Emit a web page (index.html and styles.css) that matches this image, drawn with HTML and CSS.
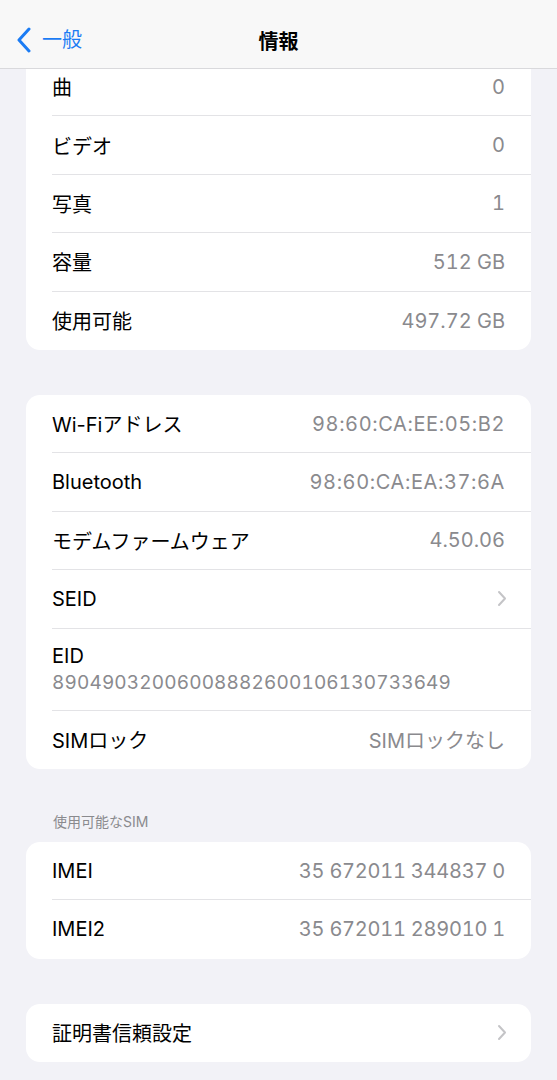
FILE: index.html
```html
<!DOCTYPE html>
<html lang="ja">
<head>
<meta charset="utf-8">
<title>情報</title>
<link rel="stylesheet" href="styles.css">
</head>
<body>
<header class="nav">
  <a class="back">
    <svg class="back-icon" width="16" height="26" viewBox="0 0 16 26"><path d="M13 2 L3 13 L13 24" fill="none" stroke="currentColor" stroke-width="3" stroke-linecap="round" stroke-linejoin="round"/></svg>
    <span>一般</span>
  </a>
  <div class="title">情報</div>
</header>
<main class="content">
  <section class="card first">
    <div class="row"><span class="label">曲</span><span class="value">0</span></div>
    <div class="row"><span class="label">ビデオ</span><span class="value">0</span></div>
    <div class="row"><span class="label">写真</span><span class="value">1</span></div>
    <div class="row"><span class="label">容量</span><span class="value">512 GB</span></div>
    <div class="row"><span class="label">使用可能</span><span class="value">497.72 GB</span></div>
  </section>

  <section class="card before-title">
    <div class="row"><span class="label">Wi-Fiアドレス</span><span class="value mac">98:60:CA:EE:05:B2</span></div>
    <div class="row"><span class="label">Bluetooth</span><span class="value mac">98:60:CA:EA:37:6A</span></div>
    <div class="row"><span class="label">モデムファームウェア</span><span class="value">4.50.06</span></div>
    <div class="row"><span class="label">SEID</span><svg class="chev" width="10" height="17" viewBox="0 0 10 17"><path d="M2 2 L8 8.5 L2 15" fill="none" stroke="currentColor" stroke-width="2" stroke-linecap="round" stroke-linejoin="round"/></svg></div>
    <div class="row tall"><span class="label">EID</span><span class="sub">89049032006008882600106130733649</span></div>
    <div class="row"><span class="label">SIMロック</span><span class="value">SIMロックなし</span></div>
  </section>

  <h2 class="section-title">使用可能なSIM</h2>
  <section class="card tight">
    <div class="row"><span class="label">IMEI</span><span class="value imei">35 672011 344837 0</span></div>
    <div class="row"><span class="label">IMEI2</span><span class="value imei">35 672011 289010 1</span></div>
  </section>

  <section class="card">
    <div class="row"><span class="label">証明書信頼設定</span><svg class="chev" width="10" height="17" viewBox="0 0 10 17"><path d="M2 2 L8 8.5 L2 15" fill="none" stroke="currentColor" stroke-width="2" stroke-linecap="round" stroke-linejoin="round"/></svg></div>
  </section>
</main>
</body>
</html>
```
FILE: styles.css
```css
* { box-sizing: border-box; }
html, body { margin: 0; padding: 0; }
body {
  background: #f2f2f7;
  font-family: Inter, "Noto Sans CJK JP", sans-serif;
  color: #000;
  width: 557px;
  height: 1080px;
  overflow: hidden;
}
.nav {
  position: fixed;
  top: 0; left: 0; right: 0;
  height: 69px;
  background: #f8f8f8;
  border-bottom: 1px solid #d9d9dc;
  display: flex;
  align-items: center;
  justify-content: center;
  z-index: 2;
}
.back {
  position: absolute;
  left: 16px;
  top: 27px;
  display: flex;
  align-items: center;
  gap: 10px;
  color: #1b7cf4;
  font-size: 20px;
  line-height: 26px;
}
.back-icon { display: block; }
.title {
  font-size: 20px;
  font-weight: 700;
  margin-top: 12px;
}
.content {
  padding: 58px 26px 0 26px;
}
.card {
  background: #fff;
  border-radius: 14px;
  margin-bottom: 46px;
  padding-left: 26px;
  overflow: hidden;
}
.card.first { border-top-left-radius: 0; border-top-right-radius: 0; margin-bottom: 45px; }
.card.before-title { margin-bottom: 43px; }
.card.tight { margin-bottom: 45px; }
.row {
  height: 58.4px;
  display: flex;
  align-items: center;
  justify-content: space-between;
  padding-right: 26px;
  border-bottom: 1px solid #e3e3e6;
  font-size: 20px;
}
.row:last-child { border-bottom: none; }
.row.tall {
  height: 82px;
  flex-direction: column;
  align-items: flex-start;
  justify-content: center;
  gap: 3px;
}
.label { color: #000; }
.value, .sub {
  color: #8a8a8e;
  font-variant-numeric: tabular-nums;
}
.value.mac { letter-spacing: 0.6px; }
.value.imei { letter-spacing: -0.25px; }
.sub { font-size: 19px; letter-spacing: 0.15px; }
.chev { color: #c4c4c7; display: block; margin-right: -2px; }
.section-title {
  margin: 0 0 10px 27px;
  font-size: 14px;
  font-weight: 400;
  color: #8a8a8e;
  line-height: 20px;
}
```
